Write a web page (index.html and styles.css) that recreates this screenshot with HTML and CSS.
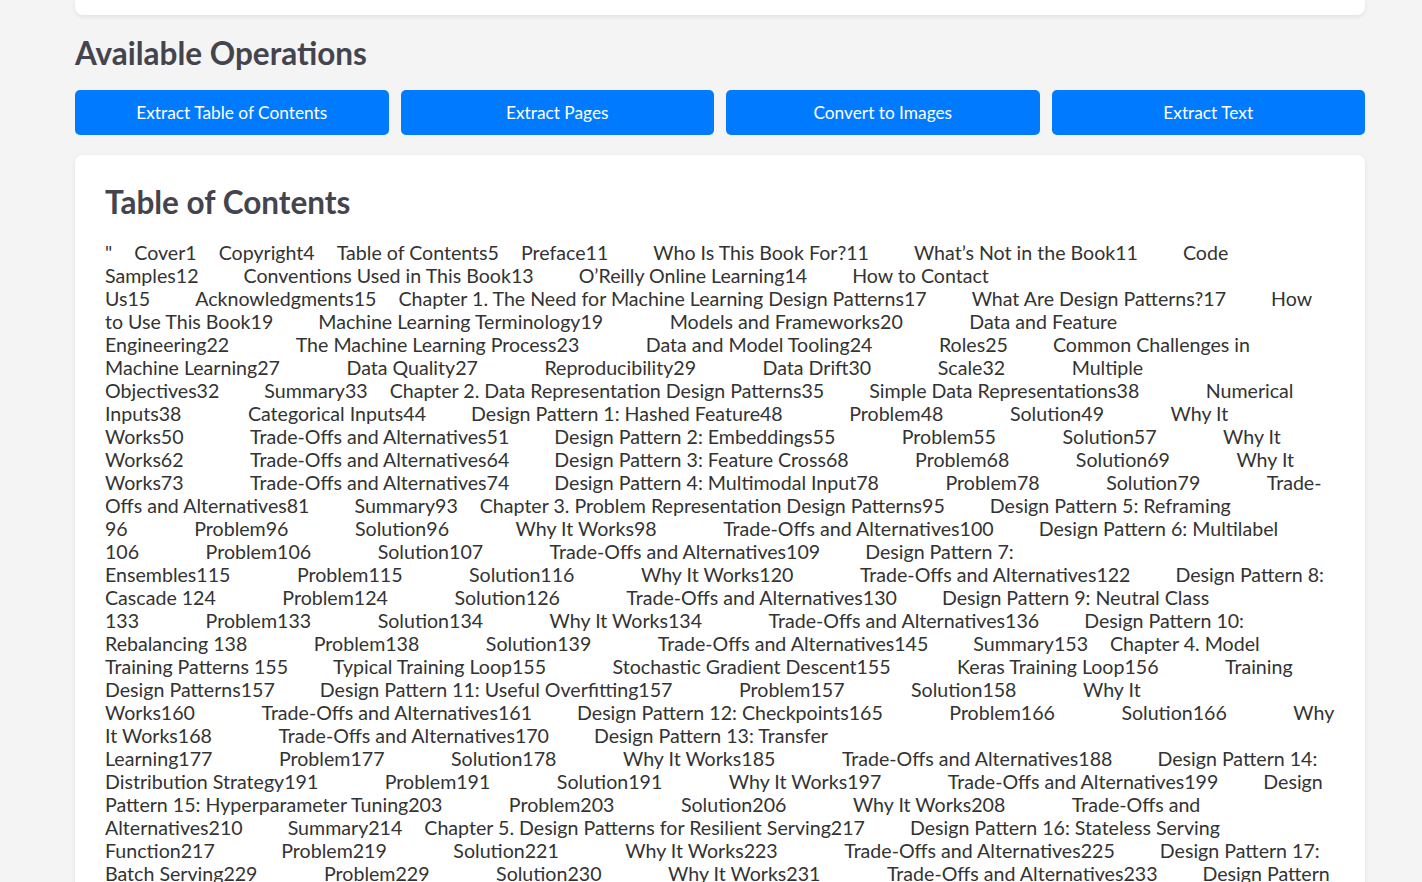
FILE: index.html
```html
<!DOCTYPE html>
<html lang="en">
<head>
<meta charset="utf-8">
<title>PDF Tools</title>
<link rel="stylesheet" href="styles.css">
</head>
<body>
<div class="page">
  <div class="card card-prev"></div>

  <h2 class="section-title">Available Operations</h2>
  <div class="ops">
    <button class="op-btn">Extract Table of Contents</button>
    <button class="op-btn">Extract Pages</button>
    <button class="op-btn">Convert to Images</button>
    <button class="op-btn">Extract Text</button>
  </div>

  <div class="card card-toc">
    <h2 class="card-title">Table of Contents</h2>
    <div class="toc">
      <div class="ln"><span>"</span><span class="ga">Cover1</span><span class="ga">Copyright4</span><span class="ga">Table of Contents5</span><span class="ga">Preface11</span><span class="gb">Who Is This Book For?11</span><span class="gb">What’s Not in the Book11</span><span class="gb">Code</span></div>
      <div class="ln"><span>Samples12</span><span class="gb">Conventions Used in This Book13</span><span class="gb">O’Reilly Online Learning14</span><span class="gb">How to Contact</span></div>
      <div class="ln"><span>Us15</span><span class="gb">Acknowledgments15</span><span class="ga">Chapter 1. The Need for Machine Learning Design Patterns17</span><span class="gb">What Are Design Patterns?17</span><span class="gb">How</span></div>
      <div class="ln"><span>to Use This Book19</span><span class="gb">Machine Learning Terminology19</span><span class="gc">Models and Frameworks20</span><span class="gc">Data and Feature</span></div>
      <div class="ln"><span>Engineering22</span><span class="gc">The Machine Learning Process23</span><span class="gc">Data and Model Tooling24</span><span class="gc">Roles25</span><span class="gb">Common Challenges in</span></div>
      <div class="ln"><span>Machine Learning27</span><span class="gc">Data Quality27</span><span class="gc">Reproducibility29</span><span class="gc">Data Drift30</span><span class="gc">Scale32</span><span class="gc">Multiple</span></div>
      <div class="ln"><span>Objectives32</span><span class="gb">Summary33</span><span class="ga">Chapter 2. Data Representation Design Patterns35</span><span class="gb">Simple Data Representations38</span><span class="gc">Numerical</span></div>
      <div class="ln"><span>Inputs38</span><span class="gc">Categorical Inputs44</span><span class="gb">Design Pattern 1: Hashed Feature48</span><span class="gc">Problem48</span><span class="gc">Solution49</span><span class="gc">Why It</span></div>
      <div class="ln"><span>Works50</span><span class="gc">Trade-Offs and Alternatives51</span><span class="gb">Design Pattern 2: Embeddings55</span><span class="gc">Problem55</span><span class="gc">Solution57</span><span class="gc">Why It</span></div>
      <div class="ln"><span>Works62</span><span class="gc">Trade-Offs and Alternatives64</span><span class="gb">Design Pattern 3: Feature Cross68</span><span class="gc">Problem68</span><span class="gc">Solution69</span><span class="gc">Why It</span></div>
      <div class="ln"><span>Works73</span><span class="gc">Trade-Offs and Alternatives74</span><span class="gb">Design Pattern 4: Multimodal Input78</span><span class="gc">Problem78</span><span class="gc">Solution79</span><span class="gc">Trade-</span></div>
      <div class="ln"><span>Offs and Alternatives81</span><span class="gb">Summary93</span><span class="ga">Chapter 3. Problem Representation Design Patterns95</span><span class="gb">Design Pattern 5: Reframing</span></div>
      <div class="ln"><span>96</span><span class="gc">Problem96</span><span class="gc">Solution96</span><span class="gc">Why It Works98</span><span class="gc">Trade-Offs and Alternatives100</span><span class="gb">Design Pattern 6: Multilabel</span></div>
      <div class="ln"><span>106</span><span class="gc">Problem106</span><span class="gc">Solution107</span><span class="gc">Trade-Offs and Alternatives109</span><span class="gb">Design Pattern 7:</span></div>
      <div class="ln"><span>Ensembles115</span><span class="gc">Problem115</span><span class="gc">Solution116</span><span class="gc">Why It Works120</span><span class="gc">Trade-Offs and Alternatives122</span><span class="gb">Design Pattern 8:</span></div>
      <div class="ln"><span>Cascade 124</span><span class="gc">Problem124</span><span class="gc">Solution126</span><span class="gc">Trade-Offs and Alternatives130</span><span class="gb">Design Pattern 9: Neutral Class</span></div>
      <div class="ln"><span>133</span><span class="gc">Problem133</span><span class="gc">Solution134</span><span class="gc">Why It Works134</span><span class="gc">Trade-Offs and Alternatives136</span><span class="gb">Design Pattern 10:</span></div>
      <div class="ln"><span>Rebalancing 138</span><span class="gc">Problem138</span><span class="gc">Solution139</span><span class="gc">Trade-Offs and Alternatives145</span><span class="gb">Summary153</span><span class="ga">Chapter 4. Model</span></div>
      <div class="ln"><span>Training Patterns 155</span><span class="gb">Typical Training Loop155</span><span class="gc">Stochastic Gradient Descent155</span><span class="gc">Keras Training Loop156</span><span class="gc">Training</span></div>
      <div class="ln"><span>Design Patterns157</span><span class="gb">Design Pattern 11: Useful Overfitting157</span><span class="gc">Problem157</span><span class="gc">Solution158</span><span class="gc">Why It</span></div>
      <div class="ln"><span>Works160</span><span class="gc">Trade-Offs and Alternatives161</span><span class="gb">Design Pattern 12: Checkpoints165</span><span class="gc">Problem166</span><span class="gc">Solution166</span><span class="gc">Why</span></div>
      <div class="ln"><span>It Works168</span><span class="gc">Trade-Offs and Alternatives170</span><span class="gb">Design Pattern 13: Transfer</span></div>
      <div class="ln"><span>Learning177</span><span class="gc">Problem177</span><span class="gc">Solution178</span><span class="gc">Why It Works185</span><span class="gc">Trade-Offs and Alternatives188</span><span class="gb">Design Pattern 14:</span></div>
      <div class="ln"><span>Distribution Strategy191</span><span class="gc">Problem191</span><span class="gc">Solution191</span><span class="gc">Why It Works197</span><span class="gc">Trade-Offs and Alternatives199</span><span class="gb">Design</span></div>
      <div class="ln"><span>Pattern 15: Hyperparameter Tuning203</span><span class="gc">Problem203</span><span class="gc">Solution206</span><span class="gc">Why It Works208</span><span class="gc">Trade-Offs and</span></div>
      <div class="ln"><span>Alternatives210</span><span class="gb">Summary214</span><span class="ga">Chapter 5. Design Patterns for Resilient Serving217</span><span class="gb">Design Pattern 16: Stateless Serving</span></div>
      <div class="ln"><span>Function217</span><span class="gc">Problem219</span><span class="gc">Solution221</span><span class="gc">Why It Works223</span><span class="gc">Trade-Offs and Alternatives225</span><span class="gb">Design Pattern 17:</span></div>
      <div class="ln"><span>Batch Serving229</span><span class="gc">Problem229</span><span class="gc">Solution230</span><span class="gc">Why It Works231</span><span class="gc">Trade-Offs and Alternatives233</span><span class="gb">Design Pattern</span></div>
      <div class="ln"><span>18: Two-Phase Predictions234</span><span class="gc">Problem234</span><span class="gc">Solution235</span><span class="gc">Trade-Offs and Alternatives239</span><span class="gb">Design Pattern 19: Keyed</span></div>
    </div>
  </div>
</div>
</body>
</html>
```
FILE: styles.css
```css
* { box-sizing: border-box; }

html, body {
  margin: 0;
  padding: 0;
  background: #f4f4f4;
}

body {
  font-family: Lato, "Liberation Sans", sans-serif;
  color: #333;
}

.page {
  width: 1290px;
  margin: 0 0 0 75px;
}

.card {
  background: #fff;
  border-radius: 8px;
  box-shadow: 0 2px 5px rgba(0, 0, 0, 0.08);
}

.card-prev {
  height: 15px;
  border-radius: 0 0 8px 8px;
}

.section-title,
.card-title {
  font-family: Lato, "Liberation Sans", sans-serif;
  font-weight: 700;
  font-size: 31.5px;
  color: #44444e;
  margin: 0;
}

.section-title {
  line-height: 38px;
  margin-top: 19px;
}

.ops {
  display: grid;
  grid-template-columns: repeat(4, 1fr);
  gap: 12px;
  margin-top: 18px;
}

.op-btn {
  height: 45px;
  border: none;
  border-radius: 5px;
  background: #007bff;
  color: #fff;
  font-family: Lato, "Liberation Sans", sans-serif;
  font-size: 17.3px;
  cursor: pointer;
  padding: 0;
}

.card-toc {
  margin-top: 20px;
  padding: 30px 30px 30px;
}

.card-title {
  line-height: 34px;
}

.toc {
  margin-top: 22px;
  font-size: 19.6px;
  line-height: 23px;
  color: #333;
}

.ln {
  display: flex;
  white-space: nowrap;
}

.ga { margin-left: 22px; }
.gb { margin-left: 45px; }
.gc { margin-left: 66.5px; }
```
